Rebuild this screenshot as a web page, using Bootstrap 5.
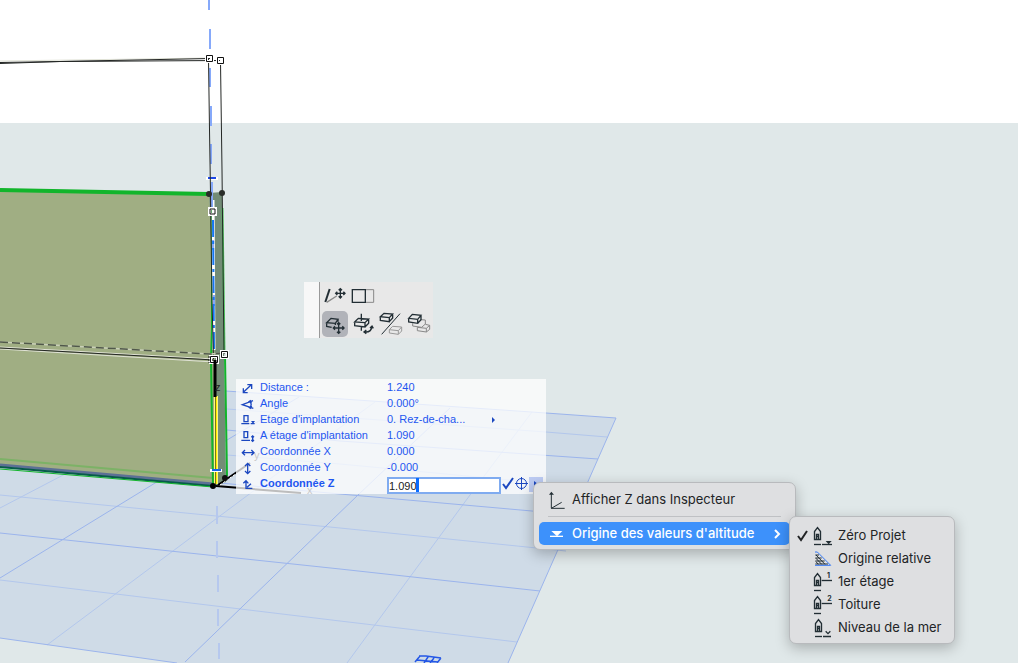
<!DOCTYPE html>
<html lang="fr">
<head>
<meta charset="utf-8">
<meta name="viewport" content="width=device-width, initial-scale=1">
<title>Vue 3D</title>
<link href="https://cdn.jsdelivr.net/npm/bootstrap@5.3.0/dist/css/bootstrap.min.css" rel="stylesheet">
<style>
  body { font-family: "Liberation Sans", Arial, sans-serif; background: #e0e8e9; }
  .scene { min-height: 100vh; }
  .scene-drawing { font-family: "Liberation Sans", Arial, sans-serif; }
  .floating { position: absolute; }

  .pet-palette { left: 304px; top: 282px; background: #e8e8e8; }
  .grip { width: 16px; background: #f7f7f7; border-right: 1px solid #999; }
  .tools { padding: 0 1px 1px 2px; }
  .tool-row { display: flex; gap: 2px; }
  .tool { width: 26px; height: 28px; padding: 0; border: 0; border-radius: 5px; background: none; line-height: 0; }
  .tool-row.low { margin-top: 1px; }
  .tool-row.low .tool { height: 26px; }
  .tool.active { background: #b1b3b9; }
  .tool svg, .ico { fill: none; stroke: #222e34; stroke-width: 4; }

  .tracker { left: 236px; top: 379px; width: 310px; height: 115px; background: rgba(255,255,255,.74); color: #1f56f0; font-size: 11px; line-height: 16px; }
  .tracker-row { height: 16px; padding-left: 4px; }
  .tracker-row .field-name { width: 127px; margin-left: 4px; white-space: nowrap; }
  .tracker .ico { stroke: #1c48c0; }
  .value-box { width: 114px; height: 17px; padding: 0; margin-top: 2px; border: 2px solid #7fabf0; border-radius: 0; background: #fff; color: #222; font-size: 11px; line-height: 13px; outline: 0; }
  .value-wrap { position: relative; }
  .caret { position: absolute; left: 29px; top: 3px; width: 3px; height: 14px; background: #0a6cff; }
  .mini { padding: 0; border: 0; background: none; line-height: 0; }
  .mini.pressed { width: 14px; height: 15px; margin-top: 2px; background: #bccbf3; }

  .ctx-menu { font-family: Inter, "Noto Sans", sans-serif; font-size: 13px; background: #dedfe1; border: 1px solid #b8babd; border-radius: 7px; box-shadow: 0 4px 14px rgba(0,0,0,.25); color: #222426; }
  .menu-main { left: 533px; top: 482px; width: 263px; padding: 5px 5px 4px; }
  .menu-sub { left: 789px; top: 516px; width: 166px; padding: 7px 5px 4px; }
  .ctx-item { border: 0; background: none; color: inherit; padding: 0; width: 100%; height: 23px; text-align: left; white-space: nowrap; border-radius: 5px; }
  .menu-main .ctx-item { padding-left: 9px; }
  .menu-main .ctx-item.chosen { background: #3d91fb; color: #fff; font-weight: 500; }
  .menu-main .caption { margin-left: 6px; }
  .ctx-line { height: 1px; margin: 5px 9px; background: #bfc1c4; }
  .tick { width: 18px; }
  .menu-sub .caption { margin-left: 5px; }
</style>
</head>
<body>
<main class="scene position-relative overflow-hidden">
  <svg class="scene-drawing position-absolute top-0 start-0 w-100 h-100" role="img" aria-label="Mur en vue 3D" fill="none">
    <rect width="100%" height="123" fill="#fff"/>
    <!-- ground plane -->
    <path d="M0 375 226 391 616 418 508 663H177L0 638Z" fill="#cfdbe7"/>
    <g stroke="#b3c7ec">
      <path d="M0 495 340 528 566 551M0 580 340 621 517 642M227 409 546 432 607 437M227 455 340 464 583 487"/>
      <path d="M0 508 67 473M47 645 248 495 375 402M347 663 470 495 532 412"/>
    </g>
    <g stroke="#9bb4ec">
      <path d="M226 391 546 413 616 418 508 663M0 638 177 663M0 533 340 569 540 591M220 483 340 494 577 515M227 430 340 441 598 459"/>
      <path d="M0 578 160 480 299 397M185 662 358 495 450 408"/>
    </g>
    <path d="M419 656H426L441 658M417 660 438 662M420 656 415 662M428 657 424 663M434 658 430 663M441 658 437 663" stroke="#2457e6" stroke-width="1.500"/>
    <path d="M217 506V524M217 541V558M218 575V592M218 609V626M219 643V659" stroke="#b6c8ee" stroke-width="2"/>
    <!-- wall -->
    <path d="M209 193 222 192 226 482 214 487Z" fill="#738c76"/>
    <path d="M0 190 209 194 215 360 214 486 0 466Z" fill="#a0ae83"/>
    <path d="M0 459 213 478" stroke="#7cb266" stroke-width="2"/>
    <path d="M0 465 213 484" stroke="#5c7095" stroke-width="3"/>
    <path d="M0 467 213 486" stroke="#075b4a" stroke-width="2"/>
    <path d="M0 469 213 487" stroke="#12b52b"/>
    <path d="M0 190 209 194" stroke="#12b52b" stroke-width="4"/>
    <path d="M212 200V330L211 360 213 485M225 356 227 476" stroke="#12b52b" stroke-width="2"/>
    <path d="M222.500 208 224.500 352" stroke="#4dc45c" stroke-width="2"/>
    <!-- vertical guide -->
    <path d="M209 0V10M210 29V49M210 68V87M211 106V126M211 144V164" stroke="#86a9fa" stroke-width="2"/>
    <path d="M213 200 214 350" stroke="#fff" stroke-width="3"/>
    <path d="M212 182V210M213 240V250M214 295V306" stroke="#86a9fa" stroke-width="2"/>
    <path d="M213 220 214 349" stroke="#1677f2" stroke-width="2" stroke-dasharray="17 4 3 4"/>
    <path d="M206 178.500H218" stroke="#fff" stroke-width="3"/>
    <path d="M208 178H216" stroke="#1c48e8" stroke-width="2"/>
    <!-- outline of the raised wall -->
    <path d="M0 61 208 58M0 349 214 362M0 347 214 359" stroke="#e0e2d6"/>
    <path d="M0 62.500 60 61.500 210 58.500M0 63.500 60 61.500 220 60.500M208.500 59 209.500 130 210.500 193 212 300 213.500 359M220.500 62 222 170 224 354M0 348 214 360" stroke="#242725"/>
    <path d="M0 342 210 354 224 353" stroke="#c9d0b8" stroke-width="1.500"/>
    <path d="M0 342 210 354 224 353" stroke="#50584a" stroke-dasharray="8 4" stroke-width="1.500"/>
    <path d="M206.500 55.500h6v6h-6zM217.500 57.500h6v6h-6zM221.500 351.500h6v6h-6zM210.500 356.500h7v6h-7zM209.500 208.500h6v6h-6z" stroke="#fff" stroke-width="3"/>
    <path d="M206.500 55.500h6v6h-6zM217.500 57.500h6v6h-6zM221.500 351.500h6v6h-6zM210.500 356.500h7v6h-7z" stroke="#111"/>
    <path d="M209 356V363" stroke="#111" stroke-dasharray="2 1"/>
    <path d="M210 209h5v5h-5z" stroke="#111" stroke-width="1"/>
    <circle cx="209" cy="194" r="3" fill="#292c29"/><circle cx="222" cy="193" r="3" fill="#292c29"/>
    <!-- axes -->
    <path d="M216 396V484" stroke="#fff" stroke-width="4"/>
    <path d="M216 396V484" stroke="#ffef00" stroke-width="3"/>
    <path d="M215.500 397V484" stroke="#7a741c"/>
    <path d="M215 360V397" stroke="#000" stroke-width="3"/>
    <path d="M210 470.500H222" stroke="#fff" stroke-width="3"/><path d="M212 470H221" stroke="#1666e8" stroke-width="2"/>
    <path d="M216 486 301 493" stroke="#000" stroke-width="2"/>
    <path d="M218 485 250 463" stroke="#000" stroke-width="2"/>
    <path d="M220 485 237 473" stroke="#fff" stroke-dasharray="2 2"/>
    <circle cx="225" cy="478" r="3" fill="#111"/><circle cx="213" cy="486" r="3" fill="#000"/>
    <g fill="#222" font-size="11"><text x="215" y="391">z</text><text x="254" y="459">y</text><text x="307" y="494">x</text></g>
  </svg>

  <div class="pet-palette floating d-flex" role="toolbar" aria-label="Palette">
    <div class="grip"></div>
    <div class="tools">
      <div class="tool-row">
        <button class="tool" aria-label="Etirer"><svg width="26" height="28" viewBox="78 18 78 84"><path d="M88 78 101 39" stroke-width="6"/><path d="M92 79 122 60" stroke="#888"/><path d="M119 52H147M133 38V66M128 43l5-5 5 5M128 61l5 5 5-5M124 47l-5 5 5 5M142 47l5 5-5 5" stroke-width="4"/></svg></button>
        <button class="tool" aria-label="Décaler"><svg width="26" height="28" viewBox="162 18 78 84"><path d="M208 41H233V79H208" stroke="#888" stroke-width="3"/><path d="M169 41H208V79H169Z"/></svg></button>
      </div>
      <div class="tool-row low">
        <button class="tool active" aria-label="Déplacer"><svg width="26" height="26" viewBox="78 105 78 78"><path d="M92 140 105 127 126 130 118 142ZM92 140V151L107 154M118 142V147M126 130V137"/><path d="M112 156H144M128 140V172M123 145l5-5 5 5M123 167l5 5 5-5M117 151l-5 5 5 5M139 151l5 5-5 5"/></svg></button>
        <button class="tool" aria-label="Tourner"><svg width="26" height="26" viewBox="162 105 78 78"><path d="M176 138 187 127 218 129 207 140ZM176 138V149L207 153V140M207 153 218 142V129M196 113V135M196 154V164"/><path d="M206 168C219 169 227 163 228 151M222 156l6-6 4 7M211 162l-7 6 7 5"/></svg></button>
        <button class="tool" aria-label="Symétrie"><svg width="26" height="26" viewBox="246 105 78 78"><path d="M253 122 264 112 290 114 280 125ZM253 122V133L280 137V125M280 137 290 126V114"/><path d="M257 175 312 113" stroke-width="3"/><path d="M280 161 290 151 317 153 307 164ZM280 161V171L307 175V164M307 175 317 165V153" stroke="#999" stroke-width="3"/></svg></button>
        <button class="tool" aria-label="Multiplier"><svg width="26" height="26" viewBox="330 105 78 78"><g stroke="#888" stroke-width="3"><path d="M374 131 388 132V144L377 154 350 150V142M388 145 401 148V160L391 168 364 164V154M364 154 391 157 401 148M391 157V168"/></g><path d="M338 127 349 115 375 118 365 130ZM338 127V138L365 142V130M365 142 375 131V118"/></svg></button>
      </div>
    </div>
  </div>

  <form class="tracker floating" onsubmit="return false">
    <div class="tracker-row d-flex"><svg class="ico" width="16" height="16" viewBox="24 15 48 48"><path d="M34 55 58 32M46 32H59V45M34 43V56H47"/></svg><span class="field-name">Distance :</span><span>1.240</span></div>
    <div class="tracker-row d-flex"><svg class="ico" width="16" height="16" viewBox="24 63 48 48"><path d="M63 80 31 92 64 103M54 82Q61 92 54 100M49 84l6-4 3 7M49 98l6 5 4-7"/></svg><span class="field-name">Angle</span><span>0.000°</span></div>
    <div class="tracker-row d-flex"><svg class="ico" width="16" height="16" viewBox="24 111 48 48"><path d="M36 125H48V143H36ZM28 149H52M56 149H68"/><path d="M57 141H69L63 149Z" fill="#1c48c0" stroke="none"/></svg><span class="field-name">Etage d'implantation</span><span>0. Rez-de-cha...</span><button type="button" class="mini ms-4" aria-label="Choisir l'étage"><svg width="8" height="14" viewBox="0 0 8 14"><path d="M3 5 6 8 3 11Z" fill="#1c48c0"/></svg></button></div>
    <div class="tracker-row d-flex"><svg class="ico" width="16" height="16" viewBox="24 159 48 48"><path d="M36 173H47V191H36ZM28 199H54M62 187V201M58 190l4-4 4 4M58 198l4 4 4-4"/></svg><span class="field-name">A étage d'implantation</span><span>1.090</span></div>
    <div class="tracker-row d-flex"><svg class="ico" width="16" height="16" viewBox="24 207 48 48"><path d="M31 236H66M39 228l-8 8 8 8M58 228l8 8-8 8"/></svg><span class="field-name">Coordonnée X</span><span>0.000</span></div>
    <div class="tracker-row d-flex"><svg class="ico" width="16" height="16" viewBox="24 255 48 48"><path d="M47 268V299M39 276l8-8 8 8M39 291l8 8 8-8"/></svg><span class="field-name">Coordonnée Y</span><span>-0.000</span></div>
    <div class="tracker-row d-flex"><svg class="ico" width="16" height="16" viewBox="24 303 48 48"><path d="M42 320V343H61M34 328l8-8 7 8M45 340 57 329"/></svg><label class="field-name fw-bold" for="coordZ">Coordonnée Z</label>
      <div class="value-wrap d-flex"><input class="value-box" id="coordZ" type="text" value="1.090"><span class="caret"></span></div>
      <button class="mini" aria-label="Valider"><svg width="13" height="18" viewBox="0 0 13 18" fill="none" stroke="#1c48c0" stroke-width="2"><path d="M2 9 5 13 12 3"/></svg></button>
      <button type="button" class="mini" aria-label="Origine"><svg width="15" height="18" viewBox="0 0 15 18" fill="none" stroke="#1c48c0"><circle cx="7.500" cy="8.500" r="5"/><path d="M1 8.500H14M7.500 2V15"/></svg></button>
      <button type="button" class="mini pressed" aria-label="Options"><svg width="14" height="14" viewBox="0 0 14 14"><path d="M5 3 9 6 5 9Z" fill="#1c48c0"/></svg></button>
    </div>
  </form>

  <div class="ctx-menu menu-main floating" role="menu">
    <button class="ctx-item d-flex align-items-center" role="menuitem"><svg class="ico" width="18" height="18" viewBox="57 42 54 54"><path d="M67 48V94H107M67 94 98 76" stroke-width="3"/><path d="M60 53 67 44 75 53Z" fill="#222e34" stroke="none"/></svg><span class="caption">Afficher Z dans Inspecteur</span></button>
    <div class="ctx-line"></div>
    <button class="ctx-item chosen d-flex align-items-center" role="menuitem"><svg width="18" height="18" viewBox="57 144 54 54"><path d="M67 162H100L84 178Z" fill="#fff"/><path d="M63 178H102" stroke="#fff" stroke-width="4"/></svg><span class="caption">Origine des valeurs d'altitude</span><svg class="ms-auto me-2" width="10" height="14" viewBox="0 0 10 14" fill="none" stroke="#fff" stroke-width="2"><path d="M3 3 7 7 3 11"/></svg></button>
  </div>

  <svg width="0" height="0" class="position-absolute"><defs><g id="house"><path d="M4.500 40.500V16.500L13.500 4.500 22.500 16.500V40.500ZM10.500 40.500V25.500H16.500V40.500M10.500 31.500H16.500"/><path d="M3 55.500H24"/></g></defs></svg>
  <div class="ctx-menu menu-sub floating" role="menu">
    <button class="ctx-item d-flex align-items-center" role="menuitem"><svg class="tick" width="18" height="14" viewBox="0 0 18 14" fill="none" stroke="#222426" stroke-width="2"><path d="M3 7 6 11 12 2"/></svg><svg class="ico" width="20" height="20" viewBox="0 0 60 60"><use href="#house"/><path d="M27 55.500H57"/><path d="M38 45H56L47 55Z" fill="#222e34" stroke="none"/></svg><span class="caption">Zéro Projet</span></button>
    <button class="ctx-item d-flex align-items-center" role="menuitem"><span class="tick"></span><svg class="ico" width="20" height="20" viewBox="0 0 60 60"><path d="M7 18H18M7 27H26M7 36H35M7 45H45M9 18 36 46M9 28 26 46M9 38 16 46" stroke-width="3"/><path d="M6 9H13L53 49H6" stroke="#3478f6" stroke-width="3"/></svg><span class="caption">Origine relative</span></button>
    <button class="ctx-item d-flex align-items-center" role="menuitem"><span class="tick"></span><svg class="ico" width="20" height="20" viewBox="0 0 60 60"><use href="#house"/><path d="M26 25.500H57"/><text x="42" y="18" font-size="21" font-weight="bold" fill="#222e34" stroke="none">1</text></svg><span class="caption">1er étage</span></button>
    <button class="ctx-item d-flex align-items-center" role="menuitem"><span class="tick"></span><svg class="ico" width="20" height="20" viewBox="0 0 60 60"><use href="#house"/><path d="M26 25.500H57"/><text x="43" y="18" font-size="21" font-weight="bold" fill="#222e34" stroke="none">2</text></svg><span class="caption">Toiture</span></button>
    <button class="ctx-item d-flex align-items-center" role="menuitem"><span class="tick"></span><svg class="ico" width="20" height="20" viewBox="0 0 60 60"><use href="#house" x="3"/><path d="M30 55.500H54M38 40 45 47 52 40"/></svg><span class="caption">Niveau de la mer</span></button>
  </div>
</main>
<script src="https://cdn.jsdelivr.net/npm/bootstrap@5.3.0/dist/js/bootstrap.bundle.min.js"></script>
</body>
</html>
